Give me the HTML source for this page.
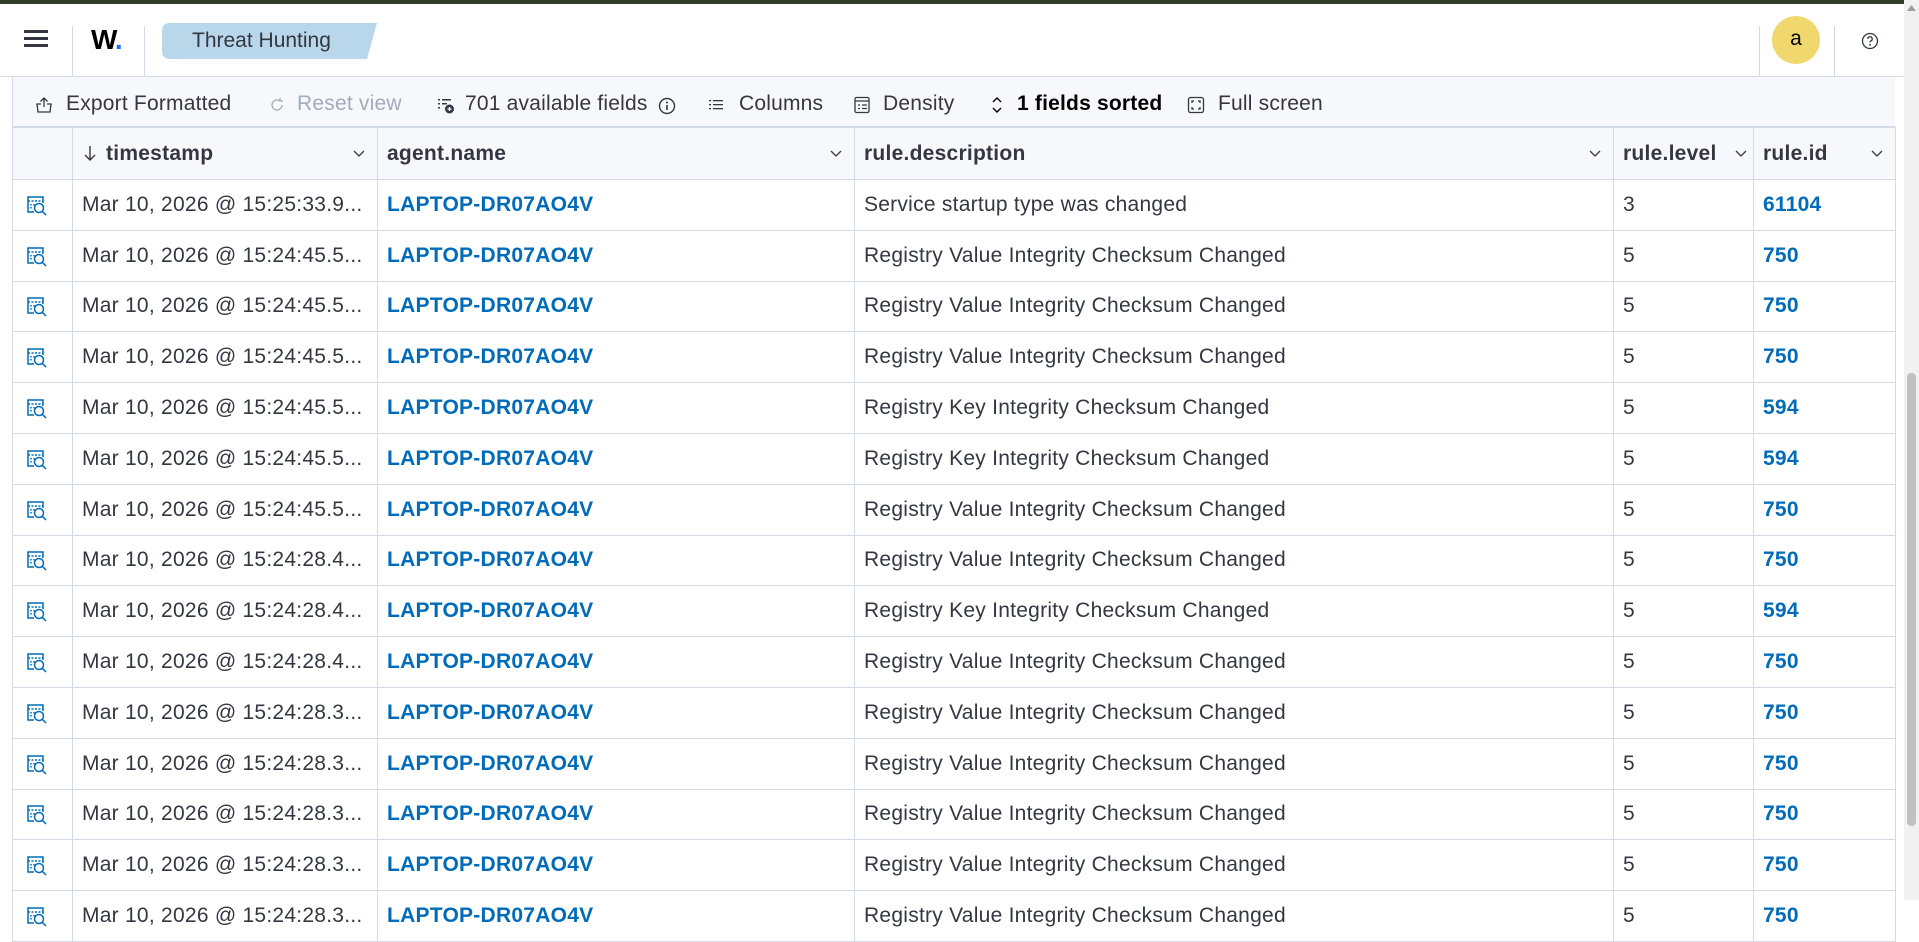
<!DOCTYPE html>
<html><head><meta charset="utf-8"><style>
*{box-sizing:border-box;margin:0;padding:0}
body{width:1919px;height:900px;overflow:hidden;background:#fff;font-family:"Liberation Sans",sans-serif;color:#343741;position:relative}
.abs{position:absolute}
.topbar{left:0;top:0;width:1919px;height:4px;background:#343d2a}
.hdr{left:0;top:4px;width:1904px;height:73px;background:#fff;border-bottom:1px solid #d3dae6}
.vl{position:absolute;width:1px;background:#d3dae6}
.tb{left:12px;top:77px;width:1883px;height:50px;background:#f7f8fc;border-left:1px solid #d3dae6;border-bottom:1px solid #d3dae6}
.tbi{position:absolute;top:2px;height:50px;line-height:50px;font-size:21px;letter-spacing:.2px;white-space:nowrap}
table{position:absolute;left:12px;top:127px;border-collapse:collapse;table-layout:fixed;font-size:21px;letter-spacing:.25px}
td,th{border:1px solid #d3dae6;height:50.8px;padding:0 9px;white-space:nowrap;overflow:hidden;text-align:left}
th{background:#f7f8fc;font-weight:bold;height:52px;position:relative}
td.l{color:#006bb8;font-weight:bold}
.chev{position:absolute;right:10px;top:17px;width:16px;height:16px}
.sb{left:1904px;top:0;width:15px;height:900px;background:#f1f1f1}
</style></head><body>
<div class="abs topbar"></div>
<div class="abs hdr">
  <svg class="abs" style="left:24px;top:24px" width="24" height="20" viewBox="0 0 24 20"><rect y="2" width="24" height="3" fill="#343741"/><rect y="9" width="24" height="3" fill="#343741"/><rect y="16" width="24" height="3" fill="#343741"/></svg>
  <div class="vl" style="left:72px;top:22px;height:51px"></div>
  <div class="abs" style="left:91px;top:20px;font-size:28px;font-weight:bold;color:#000;letter-spacing:-1px">W<span style="color:#1a73e8">.</span></div>
  <div class="vl" style="left:144px;top:22px;height:51px"></div>
  <svg class="abs" style="left:162px;top:19px" width="216" height="36"><path d="M8 0H215L205 36H8Q0 36 0 28V8Q0 0 8 0Z" fill="#b9d7ea"/></svg>
  <div class="abs" style="left:192px;top:25px;font-size:21px;color:#343741">Threat Hunting</div>
  <div class="vl" style="left:1759px;top:22px;height:51px"></div>
  <div class="abs" style="left:1772px;top:12px;width:48px;height:48px;border-radius:50%;background:#f0d86e;text-align:center;line-height:46px;font-size:21px;color:#000">a</div>
  <div class="vl" style="left:1834px;top:22px;height:51px"></div>
  <svg class="abs" style="left:1861px;top:28px" width="18" height="18" viewBox="0 0 18 18"><circle cx="9" cy="9" r="7.5" fill="none" stroke="#343741" stroke-width="1.3"/><path d="M6.8 7a2.2 2.2 0 1 1 3 2c-.6.3-.8.7-.8 1.4" fill="none" stroke="#343741" stroke-width="1.3"/><circle cx="9" cy="12.8" r=".9" fill="#343741"/></svg>
</div>
<div class="abs tb">
  <svg class="abs" style="left:22px;top:19px" width="18" height="18" viewBox="0 0 18 18" fill="none" stroke="#343741" stroke-width="1.3"><path d="M9 11V2M5.5 5.5L9 2l3.5 3.5M6 8H2l1 8h12l1-8h-4"/></svg>
  <div class="tbi" style="left:53px">Export Formatted</div>
  <svg class="abs" style="left:256px;top:20px" width="16" height="16" viewBox="0 0 16 16" fill="none" stroke="#a2abba" stroke-width="1.3"><path d="M13 8a5 5 0 1 1-2-4M11 1v3h3"/></svg>
  <div class="tbi" style="left:284px;color:#a2abba">Reset view</div>
  <svg class="abs" style="left:424px;top:20px" width="18" height="18" viewBox="0 0 18 18"><g fill="#343741"><rect x="1" y="2" width="2" height="1.5"/><rect x="5" y="2" width="9" height="1.5"/><rect x="1" y="6" width="2" height="1.5"/><rect x="5" y="6" width="5" height="1.5"/><rect x="1" y="10" width="2" height="1.5"/><circle cx="12.5" cy="12" r="4.5"/></g><path d="M12.5 10v4M10.5 12h4" stroke="#fff" stroke-width="1.3"/></svg>
  <div class="tbi" style="left:452px">701 available fields</div>
  <svg class="abs" style="left:645px;top:20px" width="18" height="18" viewBox="0 0 18 18"><circle cx="9" cy="9" r="7.5" fill="none" stroke="#343741" stroke-width="1.4"/><rect x="8.2" y="8" width="1.6" height="5" fill="#343741"/><circle cx="9" cy="5.5" r="1" fill="#343741"/></svg>
  <svg class="abs" style="left:695px;top:20px" width="16" height="16" viewBox="0 0 16 16" fill="#343741"><rect x="1" y="3" width="2" height="1.3"/><rect x="5" y="3" width="10" height="1.3"/><rect x="1" y="7" width="2" height="1.3"/><rect x="5" y="7" width="10" height="1.3"/><rect x="1" y="11" width="2" height="1.3"/><rect x="5" y="11" width="10" height="1.3"/></svg>
  <div class="tbi" style="left:726px">Columns</div>
  <svg class="abs" style="left:840px;top:19px" width="18" height="18" viewBox="0 0 18 18" fill="none" stroke="#343741" stroke-width="1.3"><rect x="2" y="1.5" width="14" height="15" rx="1.5"/><path d="M2 5h14M5 9h2M9 9h5M5 12.5h2M9 12.5h5"/></svg>
  <div class="tbi" style="left:870px">Density</div>
  <svg class="abs" style="left:977px;top:19px" width="14" height="18" viewBox="0 0 14 18" fill="none" stroke="#000" stroke-width="1.4"><path d="M3 6l4-4 4 4M3 12l4 4 4-4"/></svg>
  <div class="tbi" style="left:1004px;font-weight:bold;color:#000">1 fields sorted</div>
  <svg class="abs" style="left:1174px;top:19px" width="18" height="18" viewBox="0 0 18 18" fill="none" stroke="#343741" stroke-width="1.3"><rect x="1.5" y="1.5" width="15" height="15" rx="2"/><path d="M5 7V5h2M11 5h2v2M13 11v2h-2M7 13H5v-2"/></svg>
  <div class="tbi" style="left:1205px">Full screen</div>
</div>
<table>
<colgroup><col style="width:60px"><col style="width:305px"><col style="width:477px"><col style="width:759px"><col style="width:140px"><col style="width:142px"></colgroup>
<thead><tr><th></th>
<th><svg width="16" height="18" viewBox="0 0 16 18" style="vertical-align:-2px;margin-right:8px"><path d="M8 2v14M3 11l5 5 5-5" fill="none" stroke="#343741" stroke-width="1.4"/></svg>timestamp<svg class="chev" viewBox="0 0 16 16"><path d="M3 6l5 5 5-5" fill="none" stroke="#343741" stroke-width="1.3"/></svg></th>
<th>agent.name<svg class="chev" viewBox="0 0 16 16"><path d="M3 6l5 5 5-5" fill="none" stroke="#343741" stroke-width="1.3"/></svg></th>
<th>rule.description<svg class="chev" viewBox="0 0 16 16"><path d="M3 6l5 5 5-5" fill="none" stroke="#343741" stroke-width="1.3"/></svg></th>
<th>rule.level<svg class="chev" style="right:4px" viewBox="0 0 16 16"><path d="M3 6l5 5 5-5" fill="none" stroke="#343741" stroke-width="1.3"/></svg></th>
<th>rule.id<svg class="chev" viewBox="0 0 16 16"><path d="M3 6l5 5 5-5" fill="none" stroke="#343741" stroke-width="1.3"/></svg></th></tr></thead>
<tbody id="tb"></tbody>
</table>
<div class="abs sb"><div class="abs" style="left:3px;top:373px;width:9px;height:453px;background:#c1c1c1;border-radius:4px"></div><svg class="abs" style="left:3px;top:5px" width="9" height="6"><path d="M0 6L4.5 0 9 6Z" fill="#a0a0a0"/></svg></div>
<script>
var I='<svg width="22" height="22" viewBox="0 0 22 22" fill="none" stroke="#006bb8" stroke-width="1.5" style="display:block;margin-left:3px"><path d="M9 18H3V3h15v6"/><path d="M3 7h15" stroke-dasharray="2 1.5"/><path d="M6 10v6M9 10v2" stroke-dasharray="1.5 1.5"/><circle cx="14" cy="14" r="4.5"/><path d="M17.3 17.3L21 21"/></svg>';
var R=[["15:25:33.9","Service startup type was changed","3","61104"],["15:24:45.5","Registry Value Integrity Checksum Changed","5","750"],["15:24:45.5","Registry Value Integrity Checksum Changed","5","750"],["15:24:45.5","Registry Value Integrity Checksum Changed","5","750"],["15:24:45.5","Registry Key Integrity Checksum Changed","5","594"],["15:24:45.5","Registry Key Integrity Checksum Changed","5","594"],["15:24:45.5","Registry Value Integrity Checksum Changed","5","750"],["15:24:28.4","Registry Value Integrity Checksum Changed","5","750"],["15:24:28.4","Registry Key Integrity Checksum Changed","5","594"],["15:24:28.4","Registry Value Integrity Checksum Changed","5","750"],["15:24:28.3","Registry Value Integrity Checksum Changed","5","750"],["15:24:28.3","Registry Value Integrity Checksum Changed","5","750"],["15:24:28.3","Registry Value Integrity Checksum Changed","5","750"],["15:24:28.3","Registry Value Integrity Checksum Changed","5","750"],["15:24:28.3","Registry Value Integrity Checksum Changed","5","750"]];
var h='';R.forEach(function(r){h+='<tr><td>'+I+'</td><td>Mar 10, 2026 @ '+r[0]+'...</td><td class="l">LAPTOP-DR07AO4V</td><td>'+r[1]+'</td><td>'+r[2]+'</td><td class="l">'+r[3]+'</td></tr>'});
document.getElementById('tb').innerHTML=h;
</script>
</body></html>
